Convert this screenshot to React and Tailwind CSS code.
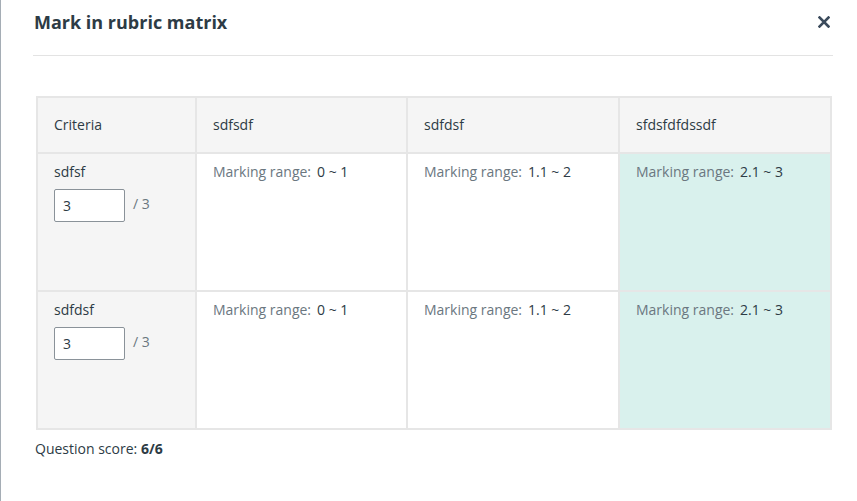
import React from "react";

const columns = ["sdfsdf", "sdfdsf", "sfdsfdfdssdf"];
const ranges = ["0 ~ 1", "1.1 ~ 2", "2.1 ~ 3"];
const criteria = [
  { name: "sdfsf", score: "3" },
  { name: "sdfdsf", score: "3" },
];

function RangeCell({ range, selected }) {
  return (
    <div className={"pl-[16px] pt-[8px] " + (selected ? "bg-[#d9f1ed]" : "bg-white")}>
      <span className="text-[#6b7780]">Marking range:</span>
      <span className="ml-[6px] text-[#2d3b45]">{range}</span>
    </div>
  );
}

export default function App() {
  return (
    <div
      className="w-[857px] h-[501px] bg-white border-l border-[#a5adb5] text-[14px] leading-[20px] text-[#2d3b45] overflow-hidden"
      style={{ fontFamily: '"Open Sans", "Noto Sans", sans-serif' }}
    >
      <div className="ml-[32px] w-[800px]">
        <div className="h-[56px] border-b border-[#e3e3e3] flex items-start justify-between pt-[10px]">
          <h1 className="text-[18px] leading-[24px] font-bold ml-[1px]">Mark in rubric matrix</h1>
          <button className="mt-[6px] mr-[3px] text-[#3b4b5c]" aria-label="Close">
            <svg width="12" height="12" viewBox="0 0 12 12">
              <path d="M1.5 1.5 L10.5 10.5 M10.5 1.5 L1.5 10.5" stroke="currentColor" strokeWidth="2.6" strokeLinecap="square" />
            </svg>
          </button>
        </div>

        <div className="mt-[40px] ml-[3px] w-[796px] grid grid-cols-[157px_209px_210px_210px] grid-rows-[54px_136px_136px] gap-[2px] p-[2px] bg-[#e6e6e6]">
          <div className="bg-[#f5f5f5] pl-[16px] flex items-center">Criteria</div>
          {columns.map((c) => (
            <div key={c} className="bg-[#f5f5f5] pl-[16px] flex items-center">{c}</div>
          ))}

          {criteria.map((row) => (
            <React.Fragment key={row.name}>
              <div className="bg-[#f5f5f5] pl-[16px] pt-[8px]">
                <div>{row.name}</div>
                <div className="mt-[7px] flex items-start">
                  <input
                    className="w-[71px] h-[33px] border border-[#8a9299] rounded-[2px] bg-white pl-[8px] text-[14px] text-[#2d3b45] outline-none"
                    defaultValue={row.score}
                  />
                  <span className="ml-[8px] mt-[5px] text-[#6b7780]">/ 3</span>
                </div>
              </div>
              {ranges.map((r, i) => (
                <RangeCell key={r} range={r} selected={i === 2} />
              ))}
            </React.Fragment>
          ))}
        </div>

        <p className="mt-[9px] ml-[2px]">
          Question score: <span className="font-bold">6/6</span>
        </p>
      </div>
    </div>
  );
}
